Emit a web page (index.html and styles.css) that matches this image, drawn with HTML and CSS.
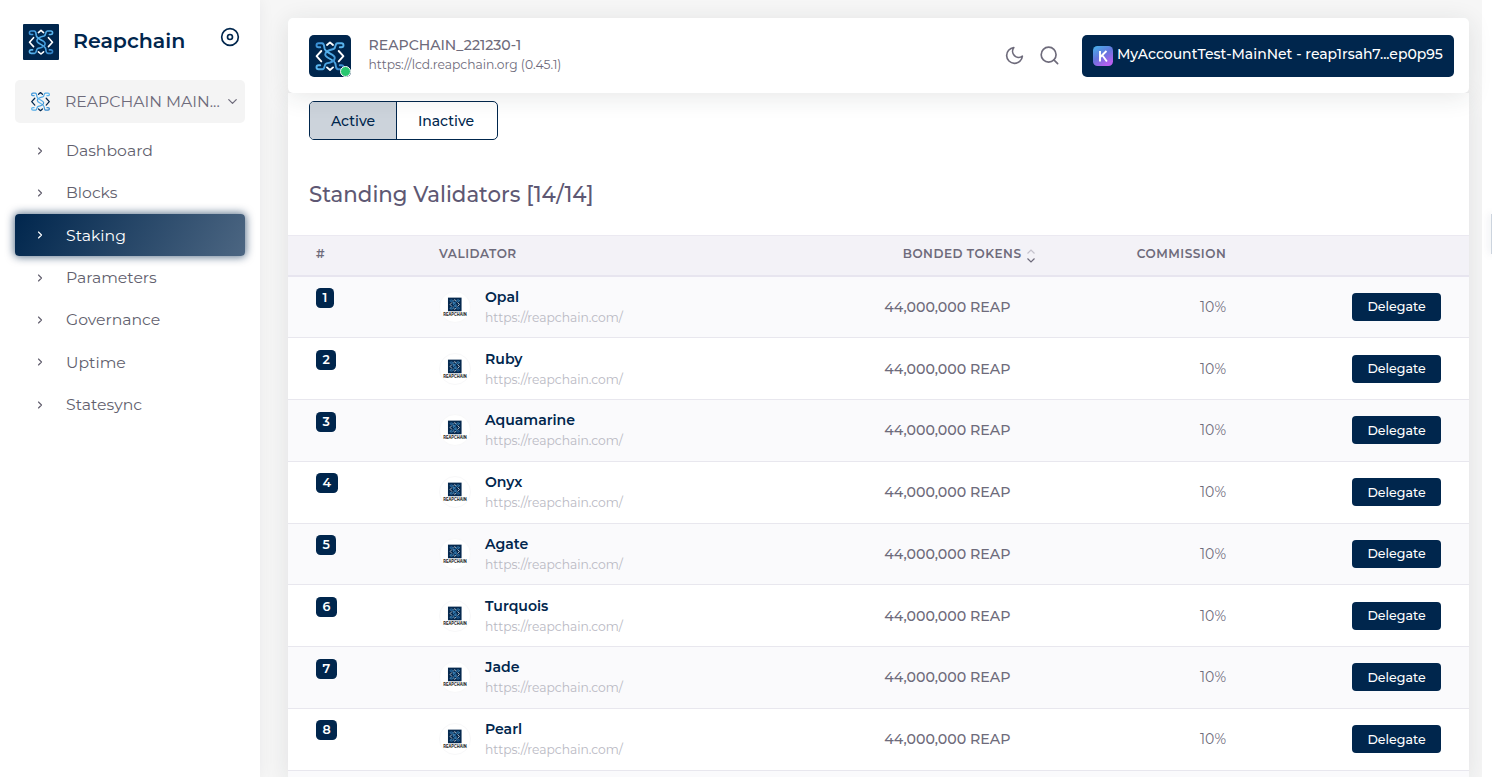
FILE: index.html
```html
<!DOCTYPE html>
<html lang="en">
<head>
<meta charset="utf-8">
<title>Reapchain</title>
<link rel="stylesheet" href="styles.css">
</head>
<body>
<svg class="defs" width="0" height="0" aria-hidden="true">
  <defs>
    <linearGradient id="blue" x1="0" y1="0" x2="1" y2="1"><stop offset="0" stop-color="#3a90d6"/><stop offset=".5" stop-color="#5cb8f0"/><stop offset="1" stop-color="#2f7fc4"/></linearGradient>
    <linearGradient id="keplr" x1="0" y1="0" x2=".6" y2="1"><stop offset="0" stop-color="#45b4ea"/><stop offset=".55" stop-color="#6574dc"/><stop offset="1" stop-color="#b75ff0"/></linearGradient>
    <symbol id="knot" viewBox="0 0 42 42">
      <g fill="none" stroke-width="1.900" stroke-linejoin="round" stroke-linecap="round">
        <path class="knot-edge" d="M12.300 16 7.600 21.200l4.700 5.200M29.700 16l4.700 5.200-4.700 5.200M18 10l3-2.600 3 2.600M18 32.400l3 2.600 3-2.600"/>
        <path stroke="url(#blue)" d="M30.800 12.200h1.700q2 0 2-2t-2-2h-4C25.500 8.200 27.500 13 24.500 14 20 15 16.200 16 16.200 19.500c0 4 9.300 4.500 10.300 9.500.4 2.500.2 5.200 2.500 5.200h3.500q2 0 2-2t-2-2h-1.700"/>
        <path stroke="url(#blue)" d="M11.200 12.200H9.500q-2 0-2-2t2-2h3.500c2.300 0 2.100 2.700 2.500 5.200 1 5 10.300 5.500 10.300 9.500 0 3.500-3.800 4.500-8.300 5.500-3 1-1 5.800-4 5.800h-4q-2 0-2-2t2-2h1.700"/>
      </g>
    </symbol>
    <symbol id="chev" viewBox="0 0 24 24"><path d="M9 18l6-6-6-6" fill="none" stroke="currentColor" stroke-width="2.300" stroke-linecap="round" stroke-linejoin="round"/></symbol>
    <symbol id="avatar" viewBox="0 0 32 32">
      <rect x="8.500" y="6" width="14.500" height="14.500" fill="#06294f"/>
      <use href="#knot" x="8" y="5.500" width="15.500" height="15.500"/>
      <text x="16" y="25.500" text-anchor="middle" textLength="25" lengthAdjust="spacingAndGlyphs" class="avatar-text">REAPCHAIN</text>
    </symbol>
  </defs>
</svg>
<div class="app">
  <aside class="sidebar">
    <div class="brand">
      <svg class="brand-logo" viewBox="0 0 36 36"><use href="#knot" width="36" height="36"/></svg>
      <span class="brand-name">Reapchain</span>
      <svg class="disc" viewBox="0 0 24 24" fill="none" stroke="currentColor" stroke-width="2"><circle cx="12" cy="12" r="10"/><circle cx="12" cy="12" r="3"/></svg>
    </div>
    <div class="chain-select">
      <svg class="chain-logo" viewBox="5 5 32 32"><use href="#knot" width="42" height="42"/></svg>
      <span class="chain-name">REAPCHAIN MAIN...</span>
      <svg class="caret" viewBox="0 0 24 24"><path d="M6 9l6 6 6-6" fill="none" stroke="currentColor" stroke-width="2" stroke-linecap="round" stroke-linejoin="round"/></svg>
    </div>
    <nav class="menu">
      <a class="item"><svg><use href="#chev"/></svg><span>Dashboard</span></a>
      <a class="item"><svg><use href="#chev"/></svg><span>Blocks</span></a>
      <a class="item current"><svg><use href="#chev"/></svg><span>Staking</span></a>
      <a class="item"><svg><use href="#chev"/></svg><span>Parameters</span></a>
      <a class="item"><svg><use href="#chev"/></svg><span>Governance</span></a>
      <a class="item"><svg><use href="#chev"/></svg><span>Uptime</span></a>
      <a class="item"><svg><use href="#chev"/></svg><span>Statesync</span></a>
    </nav>
  </aside>
  <main class="main">
    <header class="topbar">
      <div class="node-logo"><svg viewBox="0 0 42 42"><use href="#knot" width="42" height="42"/></svg><i class="status"></i></div>
      <div class="node-info"><div class="node-name">REAPCHAIN_221230-1</div><div class="node-url">https://lcd.reapchain.org (0.45.1)</div></div>
      <svg class="tool" viewBox="0 0 24 24"><path d="M21 12.790A9 9 0 1 1 11.210 3 7 7 0 0 0 21 12.790z"/></svg>
      <svg class="tool" viewBox="0 0 24 24"><circle cx="11" cy="11" r="8.500"/><path d="M21.300 21.300l-4.300-4.300"/></svg>
      <button class="account"><svg viewBox="0 0 20 20"><rect width="20" height="20" rx="4.500" fill="url(#keplr)"/><path d="M7 5v10.500M13.500 5 7.300 11M9.300 9.200 13.900 15.500" fill="none" stroke="#fff" stroke-width="1.900"/></svg><span>MyAccountTest-MainNet - reap1rsah7...ep0p95</span></button>
    </header>
    <section class="card">
      <div class="tabs"><button class="tab on">Active</button><button class="tab">Inactive</button></div>
      <h1 class="title">Standing Validators [14/14]</h1>
      <div class="row head"><span>#</span><span>VALIDATOR</span><span class="bonded">BONDED TOKENS<svg class="sort" viewBox="0 0 10 16"><path d="M1.500 5.500 5 2l3.500 3.500" opacity=".35"/><path d="M1.500 10.500 5 14l3.500-3.500"/></svg></span><span class="commission">COMMISSION</span></div>
      <div class="row"><b class="rank">1</b><svg class="avatar"><use href="#avatar"/></svg><div class="who"><div class="name">Opal</div><div class="link">https://reapchain.com/</div></div><span class="tokens">44,000,000 REAP</span><span class="rate">10%</span><button class="delegate">Delegate</button></div>
      <div class="row"><b class="rank">2</b><svg class="avatar"><use href="#avatar"/></svg><div class="who"><div class="name">Ruby</div><div class="link">https://reapchain.com/</div></div><span class="tokens">44,000,000 REAP</span><span class="rate">10%</span><button class="delegate">Delegate</button></div>
      <div class="row"><b class="rank">3</b><svg class="avatar"><use href="#avatar"/></svg><div class="who"><div class="name">Aquamarine</div><div class="link">https://reapchain.com/</div></div><span class="tokens">44,000,000 REAP</span><span class="rate">10%</span><button class="delegate">Delegate</button></div>
      <div class="row"><b class="rank">4</b><svg class="avatar"><use href="#avatar"/></svg><div class="who"><div class="name">Onyx</div><div class="link">https://reapchain.com/</div></div><span class="tokens">44,000,000 REAP</span><span class="rate">10%</span><button class="delegate">Delegate</button></div>
      <div class="row"><b class="rank">5</b><svg class="avatar"><use href="#avatar"/></svg><div class="who"><div class="name">Agate</div><div class="link">https://reapchain.com/</div></div><span class="tokens">44,000,000 REAP</span><span class="rate">10%</span><button class="delegate">Delegate</button></div>
      <div class="row"><b class="rank">6</b><svg class="avatar"><use href="#avatar"/></svg><div class="who"><div class="name">Turquois</div><div class="link">https://reapchain.com/</div></div><span class="tokens">44,000,000 REAP</span><span class="rate">10%</span><button class="delegate">Delegate</button></div>
      <div class="row"><b class="rank">7</b><svg class="avatar"><use href="#avatar"/></svg><div class="who"><div class="name">Jade</div><div class="link">https://reapchain.com/</div></div><span class="tokens">44,000,000 REAP</span><span class="rate">10%</span><button class="delegate">Delegate</button></div>
      <div class="row"><b class="rank">8</b><svg class="avatar"><use href="#avatar"/></svg><div class="who"><div class="name">Pearl</div><div class="link">https://reapchain.com/</div></div><span class="tokens">44,000,000 REAP</span><span class="rate">10%</span><button class="delegate">Delegate</button></div>
      <div class="row"></div>
    </section>
  </main>
  <div class="gutter"><div class="drawer-tab"></div></div>
</div>
</body>
</html>
```
FILE: styles.css
```css
* { box-sizing: border-box; }
body { margin: 0; height: 777px; overflow: hidden; font-family: Montserrat, Inter, sans-serif; color: #6e6b7b; background: #f6f6f6; }
button { font: inherit; margin: 0; }
.defs { position: absolute; }
.knot-edge { stroke: var(--edge, #fff); }
.app { display: flex; height: 777px; overflow: hidden; }

.sidebar { width: 260px; flex: none; background: #fff; box-shadow: 0 0 15px rgba(34, 41, 47, .06); padding: 24px 15px 0; z-index: 1; }
.brand { display: flex; height: 36px; padding-left: 8px; color: #00264d; }
.brand-logo { width: 36px; height: 36px; background: #00264d; border-radius: 1px; }
.brand-name { font-size: 20.500px; font-weight: 600; line-height: 34px; margin-left: 14px; width: 147px; }
.disc { width: 20px; height: 20px; margin-top: 3px; flex: none; }
.chain-select { display: flex; align-items: center; height: 43px; margin-top: 20px; padding: 0 5px 0 15px; background: #f4f4f4; border-radius: 5px; font-size: 15.700px; }
.chain-logo { --edge: #00264d; width: 21px; height: 21px; margin-right: 14px; }
.chain-name { flex: 1; white-space: nowrap; }
.caret { width: 15px; height: 15px; }
.menu { margin-top: 6.400px; }
.item { display: flex; align-items: center; height: 42.350px; font-size: 15.700px; color: #625f6e; border-radius: 4px; }
.item svg { width: 12px; height: 12px; margin: 0 20px 0 19px; }
.item.current { color: #fff; background: linear-gradient(118deg, #00264d, #4c6682); box-shadow: 0 0 9px 1px rgba(0, 38, 77, .65); }

.main { width: 1222px; padding: 18px 13px 0 28px; }
.topbar { display: flex; align-items: center; height: 75px; padding: 0 15px 0 21px; background: #fff; border-radius: 5px; box-shadow: 0 4px 24px rgba(34, 41, 47, .11); position: relative; z-index: 1; }
.node-logo { width: 42px; height: 42px; position: relative; background: #00264d; border-radius: 5px; }
.node-logo > svg { width: 42px; height: 42px; }
.status { position: absolute; right: 0; bottom: 0; width: 11px; height: 11px; border-radius: 50%; background: #28c76f; border: 1px solid #fff; }
.node-info { flex: 1; margin-left: 17.500px; padding-bottom: 2px; }
.node-name { font-size: 14.100px; font-weight: 500; line-height: 20px; }
.node-url { font-size: 12.300px; line-height: 19px; }
.tool { width: 21px; height: 21px; margin-right: 14px; fill: none; stroke: #6e6b7b; stroke-width: 1.900; stroke-linecap: round; stroke-linejoin: round; }
.account { width: 372px; height: 42px; margin-left: 8px; padding: 0 0 0 11px; display: flex; align-items: center; border: 0; border-radius: 5px; background: #00264d; color: #fff; font-size: 14px; font-weight: 500; white-space: nowrap; }
.account svg { width: 20px; height: 20px; margin-right: 4px; }
.account span { padding-bottom: 3px; }

.card { background: #fff; height: 684px; overflow: hidden; padding-top: 8px; box-shadow: 0 4px 24px rgba(34, 41, 47, .1); }
.tabs { display: flex; width: 189px; height: 39px; margin-left: 21px; border: 1px solid #00264d; border-radius: 5px; overflow: hidden; }
.tab { width: 86px; border: 0; padding: 0; background: none; color: #00264d; font-size: 14px; font-weight: 500; }
.tab + .tab { width: 101px; padding-right: 2px; border-left: 1px solid #00264d; }
.tab.on { background: #ccd3db; }
.title { margin: 41px 0 27px 21px; font-size: 21.300px; line-height: 27px; font-weight: 500; color: #5e5873; }
.row { display: grid; grid-template-columns: 123px 32px 14px 525.500px 215.500px 1fr; height: 61.780px; padding: 0 28px; border-bottom: 1px solid #e8e7ee; align-items: center; font-size: 14px; }
.row:nth-child(even) { background: #fafafc; }
.row.head { display: flex; height: 41.500px; padding-bottom: 2px; background: #f3f2f7; border-top: 1px solid #ebe9f1; border-bottom: 2px solid #e7e5ef; font-size: 12.100px; font-weight: 600; letter-spacing: .5px; }
.head > span { white-space: nowrap; line-height: 16px; }
.head > span:first-child { width: 123px; }
.head .bonded { display: flex; width: 234px; height: 16px; margin-left: 386px; }
.sort { width: 10px; height: 16px; margin: 2px 0 0 4px; fill: none; stroke: #6e6b7b; stroke-width: 1.200; }
.rank { justify-self: start; align-self: start; margin-top: 11.500px; height: 20px; line-height: 20px; padding: 0 6.500px; border-radius: 4.500px; background: #00264d; color: #fff; font-size: 12.600px; font-weight: 600; }
.avatar { width: 32px; height: 32px; border-radius: 50%; background: #fff; border: 1px solid #f8f8f9; }
.avatar-text { font-size: 5px; font-weight: 700; fill: #222; }
.who { grid-area: 1 / 4; width: 300px; padding-top: 1.500px; }
.name { font-size: 14.100px; font-weight: 600; line-height: 21px; color: #00264d; }
.link { font-size: 12.300px; line-height: 20.500px; color: #b9b9c3; }
.tokens { grid-area: 1 / 4; justify-self: end; font-size: 14.200px; font-weight: 500; white-space: nowrap; }
.rate { grid-area: 1 / 5; justify-self: end; }
.delegate { grid-area: 1 / 6; justify-self: end; width: 89px; height: 28px; padding: 0; border: 0; border-radius: 4px; background: #00264d; color: #fff; font-size: 12.600px; font-weight: 500; }
.gutter { width: 10px; background: #fff; padding: 214px 0 0 9px; overflow: hidden; }
.drawer-tab { width: 1px; height: 40px; background: #ccd4de; box-shadow: 0 0 8px rgba(0, 38, 77, .4); }
```
